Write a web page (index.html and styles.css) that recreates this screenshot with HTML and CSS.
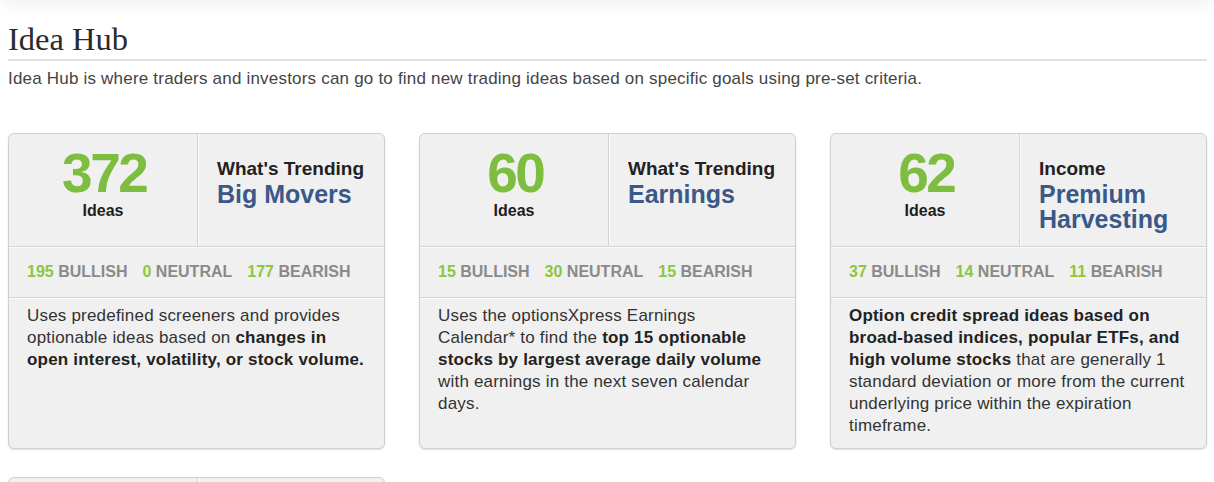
FILE: index.html
```html
<!DOCTYPE html>
<html>
<head>
<meta charset="utf-8">
<title>Idea Hub</title>
<link rel="stylesheet" href="styles.css">
</head>
<body>
<div class="topshade"></div>
<div class="page">
  <h1 class="title">Idea Hub</h1>
  <p class="intro">Idea Hub is where traders and investors can go to find new trading ideas based on specific goals using pre-set criteria.</p>
  <div class="grid">
    <div class="card">
      <div class="card-head">
        <div class="count"><span class="num">372</span><span class="ideas">Ideas</span></div>
        <div class="label"><span class="cat">What's Trending</span><span class="name">Big Movers</span></div>
      </div>
      <div class="stats"><span class="stat"><b>195</b> BULLISH</span><span class="stat"><b>0</b> NEUTRAL</span><span class="stat"><b>177</b> BEARISH</span></div>
      <div class="desc">Uses predefined screeners and provides optionable ideas based on <strong>changes in open interest, volatility, or stock volume.</strong></div>
    </div>
    <div class="card">
      <div class="card-head">
        <div class="count"><span class="num">60</span><span class="ideas">Ideas</span></div>
        <div class="label"><span class="cat">What's Trending</span><span class="name">Earnings</span></div>
      </div>
      <div class="stats"><span class="stat"><b>15</b> BULLISH</span><span class="stat"><b>30</b> NEUTRAL</span><span class="stat"><b>15</b> BEARISH</span></div>
      <div class="desc">Uses the optionsXpress Earnings Calendar* to find the <strong>top 15 optionable stocks by largest average daily volume</strong> with earnings in the next seven calendar days.</div>
    </div>
    <div class="card">
      <div class="card-head">
        <div class="count"><span class="num">62</span><span class="ideas">Ideas</span></div>
        <div class="label"><span class="cat">Income</span><span class="name">Premium Harvesting</span></div>
      </div>
      <div class="stats"><span class="stat"><b>37</b> BULLISH</span><span class="stat"><b>14</b> NEUTRAL</span><span class="stat"><b>11</b> BEARISH</span></div>
      <div class="desc"><strong>Option credit spread ideas based on broad-based indices, popular ETFs, and high volume stocks</strong> that are generally 1 standard deviation or more from the current underlying price within the expiration timeframe.</div>
    </div>
    <div class="card">
      <div class="card-head">
        <div class="count"><span class="num">48</span><span class="ideas">Ideas</span></div>
        <div class="label"><span class="cat">Income</span><span class="name">Covered Calls</span></div>
      </div>
    </div>
  </div>
</div>
</body>
</html>
```

FILE: styles.css
```css
html, body {
  margin: 0;
  padding: 0;
  background: #fff;
  overflow: hidden;
}

body {
  font-family: "Liberation Sans", Arial, sans-serif;
  color: #333;
  position: relative;
}

.topshade {
  position: absolute;
  top: -30px;
  left: 0;
  right: 0;
  height: 30px;
  box-shadow: 0 0 22px rgba(0, 0, 0, 0.09);
}

.page {
  padding: 0 7px 0 8px;
}

.title {
  margin: 0;
  padding-top: 23px;
  font-family: "Liberation Serif", "Times New Roman", serif;
  font-weight: normal;
  font-size: 32.5px;
  line-height: 32px;
  color: #2b2b2b;
  padding-bottom: 4px;
  border-bottom: 2px solid #e2e2e2;
}

.intro {
  margin: 8px 0 0;
  font-size: 17px;
  letter-spacing: 0.2px;
  line-height: 20px;
  color: #444;
}

.grid {
  margin-top: 44px;
  display: grid;
  grid-template-columns: repeat(3, 1fr);
  column-gap: 34px;
  row-gap: 28px;
}

.card {
  background: #f0f0f0;
  border: 1px solid #cfcfcf;
  border-radius: 6px;
  box-shadow: 0 1px 2px rgba(0, 0, 0, 0.12);
  display: flex;
  flex-direction: column;
  min-height: 314px;
}

.card-head {
  display: flex;
  height: 112px;
  border-bottom: 1px solid #d4d4d4;
  box-shadow: 0 1px 0 #fbfbfb;
}

.count {
  width: 189px;
  flex: none;
  border-right: 1px solid #d4d4d4;
  box-shadow: 1px 0 0 #fbfbfb;
  display: flex;
  flex-direction: column;
  align-items: center;
  padding-top: 14px;
  box-sizing: border-box;
}

.num {
  font-weight: bold;
  font-size: 55px;
  line-height: 50px;
  letter-spacing: -2.5px;
  color: #7dbd3f;
  margin-right: -2.5px;
}

.ideas {
  font-weight: bold;
  font-size: 16px;
  line-height: 20px;
  color: #1e1e1e;
  margin-top: 3px;
}

.label {
  padding: 24px 0 0 19px;
  display: flex;
  flex-direction: column;
}

.cat {
  font-weight: bold;
  font-size: 19px;
  line-height: 22px;
  color: #222;
}

.name {
  font-weight: bold;
  font-size: 25px;
  line-height: 25px;
  color: #3a5888;
  margin-top: 2px;
}

.stats {
  height: 50px;
  display: flex;
  align-items: center;
  padding-left: 18px;
  gap: 15px;
  border-bottom: 1px solid #d4d4d4;
  box-shadow: 0 1px 0 #fbfbfb;
  font-weight: bold;
  font-size: 16px;
  color: #8a8a8a;
}

.stat b {
  color: #8cc63f;
}

.desc {
  flex: 1;
  padding: 7px 18px 10px 18px;
  font-size: 17px;
  letter-spacing: 0.2px;
  line-height: 22px;
  color: #333;
}

.desc strong {
  color: #222;
}
```
